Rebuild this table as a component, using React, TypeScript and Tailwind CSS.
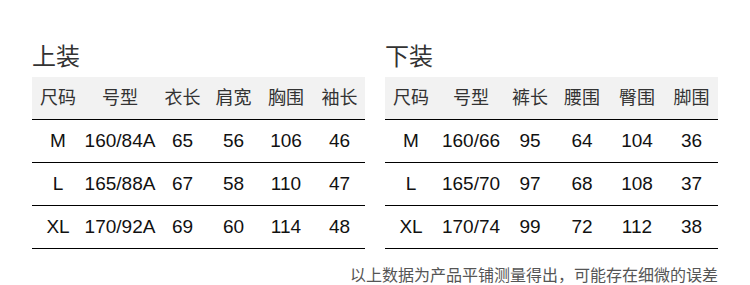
import React from 'react';

type SizeTable = {
  title: string;
  cols: string;
  head: string[];
  rows: string[][];
};

const tops: SizeTable = {
  title: '上装',
  cols: 'grid-cols-[52px_72px_53px_49px_56px_51px]',
  head: ['尺码', '号型', '衣长', '肩宽', '胸围', '袖长'],
  rows: [
    ['M', '160/84A', '65', '56', '106', '46'],
    ['L', '165/88A', '67', '58', '110', '47'],
    ['XL', '170/92A', '69', '60', '114', '48'],
  ],
};

const bottoms: SizeTable = {
  title: '下装',
  cols: 'grid-cols-[52px_68px_50px_54px_56px_53px]',
  head: ['尺码', '号型', '裤长', '腰围', '臀围', '脚围'],
  rows: [
    ['M', '160/66', '95', '64', '104', '36'],
    ['L', '165/70', '97', '68', '108', '37'],
    ['XL', '170/74', '99', '72', '112', '38'],
  ],
};

const Table: React.FC<{ data: SizeTable }> = ({ data }) => (
  <div className="w-[333px]">
    <div className="h-[30px] leading-[30px] text-[24px] text-[#333] mb-[5px]">{data.title}</div>
    <div className={`grid ${data.cols} h-[43px] bg-[#f2f2f2] border-b border-black text-[18px] text-[#333]`}>
      {data.head.map((h) => (
        <div className="flex items-center justify-center">{h}</div>
      ))}
    </div>
    {data.rows.map((r) => (
      <div className={`grid ${data.cols} h-[43px] border-b border-black text-[19px] text-[#111]`}>
        {r.map((c) => (
          <div className="flex items-center justify-center">{c}</div>
        ))}
      </div>
    ))}
  </div>
);

export default function App() {
  return (
    <div
      className="w-[750px] h-[285px] bg-white overflow-hidden"
      style={{ fontFamily: '"Liberation Sans", "Noto Sans CJK SC", sans-serif' }}
    >
      <div className="flex gap-[20px] pl-[32px] pt-[42px]">
        <Table data={tops} />
        <Table data={bottoms} />
      </div>
      <div className="w-[718px] text-right text-[16px] leading-[16px] text-[#555] mt-[19px]">
        以上数据为产品平铺测量得出，可能存在细微的误差
      </div>
    </div>
  );
}
